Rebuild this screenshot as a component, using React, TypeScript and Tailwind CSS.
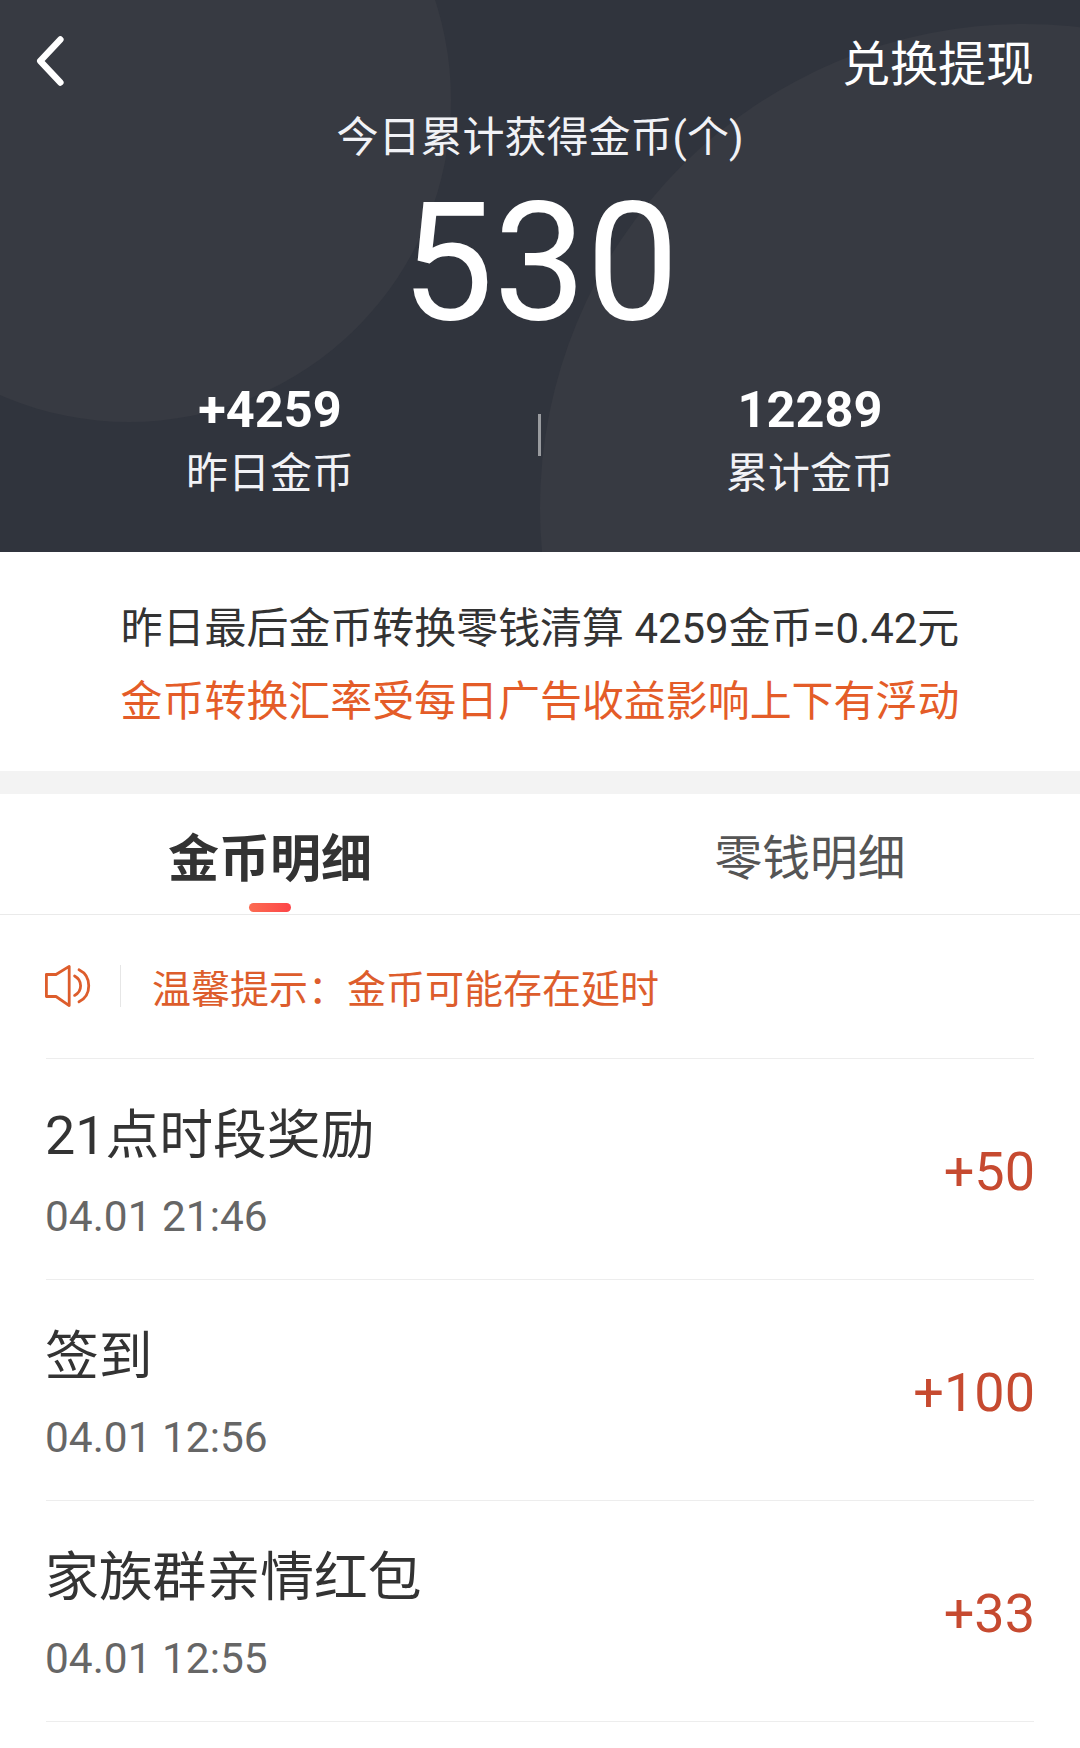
type CoinRecord = {
  title: string;
  time: string;
  amount: string;
};

const records: CoinRecord[] = [
  { title: "21点时段奖励", time: "04.01 21:46", amount: "+50" },
  { title: "签到", time: "04.01 12:56", amount: "+100" },
  { title: "家族群亲情红包", time: "04.01 12:55", amount: "+33" },
];

function BackIcon() {
  return (
    <svg width="32" height="56" viewBox="0 0 32 56" fill="none">
      <path
        d="M25.4 6.5 5.2 28 25.4 49.5"
        stroke="#fff"
        strokeWidth="6.4"
        strokeLinecap="round"
        strokeLinejoin="round"
      />
    </svg>
  );
}

function SpeakerIcon() {
  return (
    <svg width="48" height="44" viewBox="0 0 48 44" fill="none" stroke="#dd5d2c" strokeWidth="2.8">
      <path d="M2.4 10.5H12L25.2 2.4V41.6L12 32.5H2.4Z" strokeLinejoin="round" />
      <path d="M30.6 12C38.6 16.4 38.6 27.4 30.6 31.4" strokeLinecap="round" />
      <path d="M35 5.8C48 12.2 48 31.4 35 37.8" strokeLinecap="round" />
    </svg>
  );
}

function Stat({ value, label }: { value: string; label: string }) {
  return (
    <div className="flex flex-1 flex-col items-center">
      <span className="text-[50.5px] leading-[60px] font-bold">{value}</span>
      <span className="mt-[6px] text-[42px] leading-[56px] text-[#f1f2f6]">{label}</span>
    </div>
  );
}

// Dark summary block at the top: nav, today's total and the two stats
function Summary() {
  return (
    <header className="relative h-[552px] overflow-hidden bg-[#30343d] text-white">
      <svg className="absolute inset-0" width="1080" height="552" fill="#373a42">
        <circle cx="129" cy="100" r="322" />
        <circle cx="1024" cy="508" r="484" />
      </svg>

      <div className="relative flex flex-col">
        <nav className="flex h-[111px] items-start justify-between pt-[29px] pr-[46px] pl-[35px]">
          <button type="button" aria-label="返回" className="mt-1">
            <BackIcon />
          </button>
          <button type="button" className="text-[48px] leading-[72px]">
            兑换提现
          </button>
        </nav>
        <p className="text-center text-[42px] leading-[54px] text-[#f1f2f6]">今日累计获得金币(个)</p>
        <p className="mt-2 text-center text-[165px] leading-[180px]">530</p>
        <div className="mt-[27px] flex items-start">
          <Stat value="+4259" label="昨日金币" />
          <div className="-mr-px -ml-[2px] mt-[34px] h-[42px] w-[3px] bg-[#999b9f]" />
          <Stat value="12289" label="累计金币" />
        </div>
      </div>
    </header>
  );
}

function Tabs() {
  return (
    <div className="flex h-[121px] border-b border-[#eaeaea]">
      <button type="button" className="flex flex-1 flex-col items-center pt-[31px]">
        <span className="text-[51px] leading-[70px] font-bold text-[#333]">金币明细</span>
        <span className="mt-2 h-[9px] w-[42px] rounded-full bg-linear-to-r from-[#fb6b52] to-[#fd4448]" />
      </button>
      <button type="button" className="flex flex-1 flex-col items-center pt-[30px]">
        <span className="text-[47.8px] leading-[70px] text-[#555]">零钱明细</span>
      </button>
    </div>
  );
}

function RecordRow({ record }: { record: CoinRecord }) {
  return (
    <li className="flex h-[221px] items-start justify-between border-b border-[#ededed] pt-[41px]">
      <div className="-ml-px flex flex-col">
        <span className="text-[53.8px] leading-[72px] text-[#333]">{record.title}</span>
        <span className="mt-[18px] text-[42.4px] leading-[54px] text-[#666]">{record.time}</span>
      </div>
      <span className="-mr-px pt-[36px] text-[54px] leading-[72px] text-[#c64a30]">{record.amount}</span>
    </li>
  );
}

export default function App() {
  return (
    <div className="h-[1748px] w-[1080px] overflow-hidden bg-white font-[Roboto,'Noto_Sans_CJK_SC',sans-serif]">
      <Summary />

      <section className="flex h-[219px] flex-col pt-[41px] text-center text-[41.95px] leading-[72px]">
        <p className="text-[#333]">昨日最后金币转换零钱清算 4259金币=0.42元</p>
        <p className="mt-px text-[#e45c28]">金币转换汇率受每日广告收益影响上下有浮动</p>
      </section>
      <div className="h-[23px] bg-[#f3f3f3]" />

      <Tabs />

      <main className="px-[46px]">
        <div className="flex h-[144px] items-center border-b border-[#ededed] pb-[2px]">
          <div className="-ml-[2px]">
            <SpeakerIcon />
          </div>
          <div className="ml-[28px] h-[42px] w-px bg-[#e6e6e6]" />
          <p className="ml-[31px] pt-2 text-[39px] leading-[56px] text-[#dd5d2c]">
            温馨提示：金币可能存在延时
          </p>
        </div>
        <ul>
          {records.map((record) => (
            <RecordRow key={record.title} record={record} />
          ))}
        </ul>
      </main>
    </div>
  );
}
